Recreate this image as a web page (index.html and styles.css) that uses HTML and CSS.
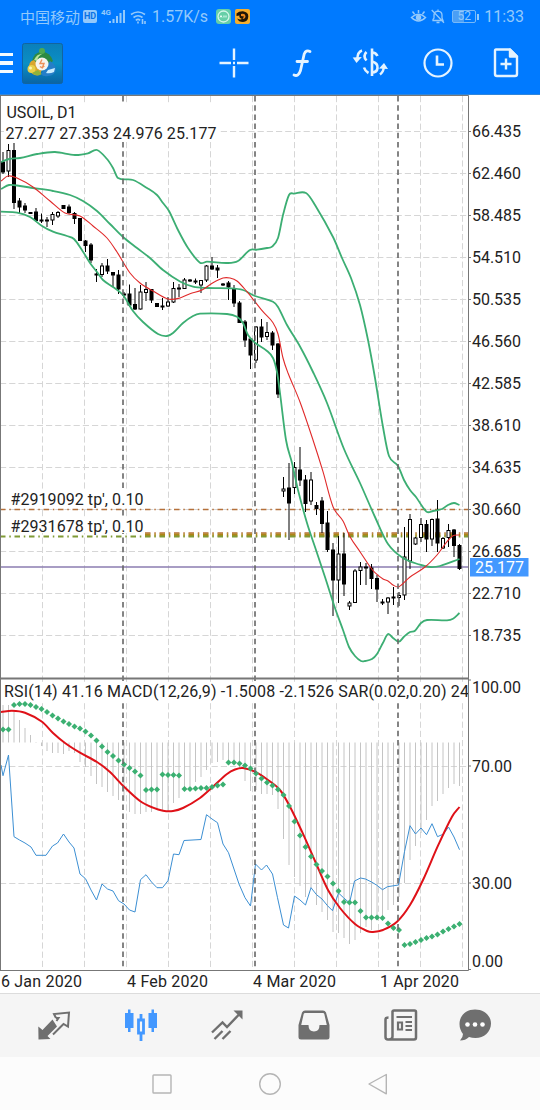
FILE: index.html
```html
<!DOCTYPE html>
<html lang="zh">
<head>
    <meta charset="UTF-8">
    <meta name="viewport" content="width=device-width, initial-scale=1.0">
    <title>USOIL, D1</title>
    <link rel="stylesheet" href="styles.css">
</head>
<body>
    <div class="screen">
        <header class="header">
            <div class="status">
                <span class="carrier">中国移动</span>
                <span class="hd">HD</span>
                <svg class="signal" width="25" height="18" viewBox="0 0 25 18">
                    <text x="0" y="7" font-size="8" font-weight="700" fill="currentColor">4G</text>
                    <path d="M9 15v-2M12.500 15v-4M16 15V8M19.500 15V5M23 15V2" stroke="currentColor" stroke-width="2" fill="none"/>
                </svg>
                <svg class="wifi" width="17" height="16" viewBox="0 0 17 16" fill="none" stroke="currentColor" stroke-width="1.6">
                    <path d="M1 5.500Q8 .5 15 5.500M3.500 8.500Q8 5 12.500 8.500M5.800 11.300Q8 9.500 10.200 11.300"/>
                    <path d="M8 12.500v2M12.500 10v5M15 12v3"/>
                </svg>
                <span class="speed">1.57K/s</span>
                <svg class="badge" width="15" height="15" viewBox="0 0 15 15">
                    <rect width="15" height="15" rx="3" fill="#66cfa8"/>
                    <circle cx="7.500" cy="7.500" r="5.500" fill="none" stroke="#d5f7ea" stroke-width="1.300"/>
                    <path d="M4 8.500l1-2 1 2M8 6.500v2M10 6.500v2" stroke="#e8fff6" fill="none"/>
                </svg>
                <svg width="15" height="15" viewBox="0 0 15 15">
                    <rect width="15" height="15" rx="2" fill="#f6ae2d"/>
                    <path d="M1.500 4.500Q4 2 8 2.200Q13.500 3 13.300 7.500Q13 12.800 8 13Q3.500 13 2.200 9.500Q5 11 7 10Q3.500 8.500 4.500 6.500L1.500 7Z" fill="#201607"/>
                    <path d="M6 5Q10 4 10.500 7Q10.500 10 7.500 10L9 7.500L6 7Z" fill="#f08a1c"/>
                </svg>
                <div class="status-right">
                    <svg width="17" height="15" viewBox="0 0 17 15" fill="none" stroke="currentColor" stroke-width="1.500">
                        <path d="M1.500 8.500Q8.500 2 15.500 8.500Q8.500 15.500 1.500 8.500ZM8.500 4V1M4.500 5L2.500 2.500M12.500 5L14.500 2.500"/>
                        <circle cx="8.500" cy="8.500" r="2" fill="currentColor"/>
                    </svg>
                    <svg class="bell" width="14" height="15" viewBox="0 0 14 15" fill="none" stroke="currentColor" stroke-width="1.300">
                        <path d="M2 11.500V10.500L3 9V5.500Q3.500 2.500 7 2.200Q10.800 2.500 11 6V9L12 11.500ZM7 2V.5M5.500 13.500H8.500M.7 1L13 13.700"/>
                    </svg>
                    <span class="battery">52</span>
                    <span class="clock">11:33</span>
                </div>
            </div>
            <div class="toolbar">
                <div class="burger"><i></i><i></i><i></i></div>
                <svg class="logo" width="41" height="41" viewBox="0 0 41 41">
                    <defs>
                        <linearGradient id="tile" x2="0" y2="1"><stop offset="0" stop-color="#0a7fba"/><stop offset=".5" stop-color="#0b8fc4"/><stop offset="1" stop-color="#0964a5"/></linearGradient>
                    </defs>
                    <rect x=".5" y=".5" width="40" height="40" rx="2" fill="url(#tile)" stroke="#1264a0"/>
                    <path d="M10 18Q12 9 20 9Q28 9 31 18L26 22L14 22Z" fill="#2d8a43"/>
                    <path d="M12 17Q15 10.500 20 11Q16 13 15 18Z" fill="#b9e39a"/>
                    <circle cx="20" cy="8" r="3" fill="#4fa951"/>
                    <path d="M7 27Q6 18 12 17L20 26L18 32Q11 34 7 27Z" fill="#d9a62e"/>
                    <circle cx="9.500" cy="26" r="4" fill="#e8d04a"/>
                    <circle cx="8.500" cy="25" r="1.500" fill="#fff6ae"/>
                    <path d="M10 30Q15 34 20 31L16 27Z" fill="#8fb33a"/>
                    <path d="M19 31L28 18Q33 21 34 26Q33 33 26 33Q21 34 19 31Z" fill="#257ec8"/>
                    <path d="M26 27L33 25L32 29Q28 31 24 30Z" fill="#c9edff"/>
                    <circle cx="20" cy="21" r="6.500" fill="#f6f4ef"/>
                    <path d="M20 16.500L18 20.500H22L20 25.500M18 23.500Q20 25.500 22.300 23" stroke="#ee9058" stroke-width="1.400" fill="none"/>
                </svg>
                <div class="tools">
                    <svg width="34" height="34" viewBox="0 0 34 34" stroke="currentColor" stroke-width="2.400">
                        <path d="M2.500 17H14M20 17H31.500M17 2.500V14M17 20V31.500M16 17H18"/>
                    </svg>
                    <svg width="34" height="34" viewBox="0 0 34 34" fill="none" stroke="currentColor" stroke-width="2.800" stroke-linecap="round" stroke-linejoin="round">
                        <path d="M25 5.500Q21 3.500 19.200 8L15.500 24.500Q13.500 31 9 29M12 15.500H22.500"/>
                    </svg>
                    <svg width="36" height="34" viewBox="0 0 36 34" fill="none" stroke="currentColor" stroke-width="2.600">
                        <path d="M20 2.500V30"/>
                        <path d="M25.500 10Q24 6.500 20 6.500M14.500 6Q10.500 10 14.500 14.500M12 21.500Q13 25 16.500 27M20 15.500Q26 17 25.500 22Q25 26.500 20 26.500"/>
                        <path d="M10 4.500Q5.500 6 5.300 13" stroke-width="2.400"/>
                        <path d="M.7 11.500L4.500 17L9.800 11Z" fill="currentColor" stroke="none"/>
                        <path d="M28 28.500Q31.500 26 31.800 21" stroke-width="2.400"/>
                        <path d="M27 22.500L32 17L36 23Z" fill="currentColor" stroke="none"/>
                    </svg>
                    <svg width="34" height="34" viewBox="0 0 34 34" fill="none" stroke="currentColor" stroke-width="2.200">
                        <circle cx="17" cy="17" r="13.500"/>
                        <path d="M16 9.500V18.500H23" stroke-width="2.600"/>
                    </svg>
                    <svg width="34" height="34" viewBox="0 0 34 34" fill="none" stroke="currentColor" stroke-width="2.400" stroke-linejoin="round">
                        <path d="M7 3.500H21L28 10.500V28Q28 30 26 30H8Q6 30 6 28V5Q6 3.500 7 3.500Z"/>
                        <path d="M21 3.500V10.500H28Z" fill="currentColor"/>
                        <path d="M17 12.500V23.500M11.500 18H22.500"/>
                    </svg>
                </div>
            </div>
        </header>

        <!-- chart coordinates are screen pixels, the view starts below the header -->
        <svg class="chart" width="540" height="898" viewBox="0 95 540 898">
            <defs>
                <clipPath id="plot"><rect x="0" y="95" width="468" height="876"/></clipPath>
            </defs>
            <g id="grid"></g>
            <g class="orders">
                <path class="tp" d="M0 509.500H468"/>
                <path class="tp" d="M145 533H468"/>
                <path class="tp-wide" d="M145 535H468"/>
                <path class="open" d="M0 536.500H468"/>
            </g>
            <path class="price-line" d="M0 567H468"/>
            <g id="histogram" class="histogram"></g>
            <g id="candles"></g>
            <g id="lines" clip-path="url(#plot)"></g>
            <g id="sar" class="sar"></g>
            <g id="months"></g>

            <g class="labels" clip-path="url(#plot)">
                <rect x="4" y="104" width="215" height="37"/>
                <rect x="9" y="491" width="137" height="17"/>
                <rect x="9" y="517" width="136" height="16"/>
                <rect x="3" y="682" width="465" height="19"/>
                <text x="6.500" y="118" textLength="70">USOIL, D1</text>
                <text x="5.500" y="139" textLength="211">27.277 27.353 24.976 25.177</text>
                <text x="10.500" y="505" textLength="133">#2919092 tp', 0.10</text>
                <text x="10.500" y="532" textLength="133">#2931678 tp', 0.10</text>
                <text x="4" y="697" textLength="465">RSI(14) 41.16 MACD(12,26,9) -1.5008 -2.1526 SAR(0.02,0.20) 24</text>
            </g>
            <g class="frame">
                <path d="M.5 95V970.500M0 95.500H468.500V970.500"/>
                <path d="M0 678.500H468" class="split"/>
                <path d="M0 970.500H468.500"/>
            </g>
            <g id="axis" class="axis"></g>
            <rect class="price-box" x="470" y="558" width="58.500" height="18.500"/>
            <text class="price-text" x="475" y="573" textLength="49">25.177</text>
        </svg>

        <nav class="tabs">
            <svg width="34" height="34" viewBox="0 0 34 34">
                <path d="M1.300 18.500L5.500 22L15.500 11.500L20 18.500L10.500 28L13.500 31L1.500 31.500Z" fill="currentColor"/>
                <path d="M19 10L17 6L32 4.500L31 18.500L26.500 16L16 26.500M19 10L21.500 10L19.500 13" fill="none" stroke="currentColor" stroke-width="2"/>
            </svg>
            <svg class="active" width="34" height="34" viewBox="0 0 34 34">
                <path d="M1 5H4V1.500H6.500V5H9.500V20H6.500V24H4V20H1ZM24.500 5H27.500V1.500H30V5H33V20H30V24H27.500V20H24.500Z" fill="currentColor"/>
                <path d="M14.500 12H19.500V25H14.500ZM17 11V6M17 26V33" fill="none" stroke="currentColor" stroke-width="2.800"/>
            </svg>
            <svg width="34" height="34" viewBox="0 0 34 34" fill="none" stroke="currentColor" stroke-width="2.400">
                <path d="M2 24.500L12.500 14.500L17 19L29 6.500M4.500 31L12.500 23M12.500 31L20.500 23"/>
                <path d="M23.500 2.500H32.500V11.500Z" fill="currentColor" stroke="none"/>
            </svg>
            <svg width="34" height="34" viewBox="0 0 34 34">
                <path fill-rule="evenodd" d="M8 2.500H26Q28 2.500 29 4.500L32.500 17V29Q32.500 31.500 30 31.500H4Q1.500 31.500 1.500 29V17L5 4.500Q6 2.500 8 2.500ZM8 5Q7 5 6.700 6L4.200 17H11.500Q11.500 23.500 17 23.500Q22.500 23.500 22.500 17H29.800L27.300 6Q27 5 26 5Z" fill="currentColor"/>
            </svg>
            <svg width="34" height="34" viewBox="0 0 34 34" fill="none" stroke="currentColor" stroke-width="2.500">
                <path d="M8.500 4Q8.500 2.500 10 2.500H30.500Q32 2.500 32 4V29.500Q32 31.500 30 31.500H4Q1.500 31.500 1.500 29V11.500Q1.500 9.500 4.500 9.500M8.500 3V28.500Q8.500 31.500 5 31.500"/>
                <path d="M12.500 9H28M21.500 14H28M21.500 18H28M21.500 22H28" stroke-width="2.200"/>
                <path d="M14 14.500H18V21.500H14Z" stroke-width="2.200"/>
            </svg>
            <svg width="34" height="34" viewBox="0 0 34 34">
                <path d="M17 1.500C26 1.500 33 7.500 33 15.500C33 24 26 30 17.500 30Q14 30 11 29Q7.500 32.500 2 32.500Q5 29.500 5 26Q1.500 21.500 1.500 16C1.500 7.500 8 1.500 17 1.500Z" fill="currentColor"/>
                <g fill="#fff"><circle cx="9.500" cy="16.500" r="2.300"/><circle cx="17" cy="16.500" r="2.300"/><circle cx="24.500" cy="16.500" r="2.300"/></g>
            </svg>
        </nav>

        <footer class="system-nav">
            <svg width="24" height="24" viewBox="0 0 24 24"><rect x="3" y="3" width="18" height="18" rx=".8"/></svg>
            <svg width="24" height="24" viewBox="0 0 24 24"><circle cx="12" cy="12" r="10.300"/></svg>
            <svg width="24" height="24" viewBox="0 0 24 24"><path d="M20.300 2.500V21.800L3 12Z"/></svg>
        </footer>
    </div>
    <script src="chart.js"></script>
</body>
</html>
```
FILE: styles.css
```css
* {
    box-sizing: border-box;
}
body {
    margin: 0;
    background: #fff;
    font-family: Roboto, "Noto Sans CJK SC", sans-serif;
}
.screen {
    display: flex;
    flex-direction: column;
    width: 540px;
    height: 1110px;
    overflow: hidden;
}
svg {
    display: block;
    flex: none;
}
.header {
    height: 95px;
    background: #007aff;
    color: #e4f3ff;
    border-bottom: 1px solid #2f86dc;
}
.status {
    display: flex;
    align-items: center;
    height: 32px;
    padding: 1px 16px 0 20px;
    color: #93c9fb;
    font-size: 16px;
}
.carrier {
    width: 63px;
    font-size: 15px;
    white-space: nowrap;
}
.hd {
    width: 14px;
    height: 13px;
    border-radius: 2px;
    background: #93c9fb;
    color: #0872e6;
    font-size: 9px;
    font-weight: 700;
    line-height: 13px;
    text-align: center;
}
.signal {
    margin-left: 4px;
}
.wifi {
    margin-left: 4px;
}
.speed {
    width: 64px;
    margin-left: 5px;
}
.badge {
    margin-right: 4px;
}
.status-right {
    display: flex;
    align-items: center;
    margin-left: auto;
}
.bell {
    margin-left: 4px;
}
.battery {
    position: relative;
    width: 24px;
    height: 13px;
    margin: 0 8px 0 7px;
    border: 1px solid #78b9f8;
    border-radius: 2px;
    background: linear-gradient(90deg, #4b9ff5 52%, transparent 52%);
    font-size: 12px;
    line-height: 11px;
    text-align: center;
}
.battery::after {
    content: "";
    position: absolute;
    top: 3px;
    right: -4px;
    width: 2px;
    height: 6px;
    background: #93c9fb;
}
.clock {
    font-size: 16px;
}
.toolbar {
    display: flex;
    align-items: center;
    height: 62px;
}
.burger {
    display: flex;
    flex-direction: column;
    gap: 5px;
    width: 13px;
}
.burger i {
    height: 3.500px;
    background: #f3faff;
}
.logo {
    margin-left: 9px;
}
.tools {
    display: grid;
    grid-template-columns: repeat(5, 68px);
    justify-items: center;
    margin-left: auto;
}

/* chart */
.chart {
    background: #fff;
    font-size: 16px;
}
.chart text {
    fill: #222;
}
.labels rect {
    fill: #fff;
}
.grid {
    stroke: #d6d6d6;
    stroke-dasharray: 6.2 3;
}
.month {
    stroke: #666;
    stroke-width: 1.6;
    stroke-dasharray: 5.5 3.7;
}
.frame path {
    fill: none;
    stroke: #777;
}
.frame .split {
    stroke-width: 2;
}
.axis path {
    stroke: #777;
}
.orders path {
    fill: none;
}
.orders .tp {
    stroke: #b5703a;
    stroke-width: 1.4;
    stroke-dasharray: 5.5 3.8 1.5 3.7;
}
.orders .tp-wide {
    stroke: #b08418;
    stroke-width: 3;
    stroke-dasharray: 5.5 3.8 1.5 3.7;
}
.orders .open {
    stroke: #7f9a35;
    stroke-width: 1.8;
    stroke-dasharray: 5.5 3.8 1.5 3.7;
}
.price-line {
    stroke: #8b7db0;
    stroke-width: 1.4;
}
.price-box {
    fill: #4398ff;
}
.chart .price-text {
    fill: #fff;
}
.candle {
    stroke: #000;
    fill: #000;
}
.candle .up {
    fill: #fff;
}
.histogram path {
    stroke: #c4c4c4;
}
.sar path {
    fill: #3bb071;
}
.band {
    fill: none;
    stroke: #3cae73;
    stroke-width: 1.8;
    stroke-linejoin: round;
}
.average {
    fill: none;
    stroke: #e02a2a;
    stroke-width: 1.1;
}
.signal-line {
    fill: none;
    stroke: #df1118;
    stroke-width: 2;
}
.rsi {
    fill: none;
    stroke: #3c8fd3;
    stroke-width: 1;
}

/* bottom */
.tabs {
    display: grid;
    grid-template-columns: repeat(5, 86.700px) 62px;
    align-items: center;
    justify-items: center;
    height: 64px;
    padding: 0 0 1px 10.500px;
    border-top: 1px solid #dcdcdc;
    background: #f5f5f5;
    color: #6f6f6f;
}
.tabs .active {
    color: #4398ff;
}
.system-nav {
    display: grid;
    grid-template-columns: repeat(3, 108px);
    align-items: center;
    justify-content: center;
    justify-items: center;
    height: 53px;
    background: #fcfcfc;
}
.system-nav svg {
    fill: none;
    stroke: #b5b5b5;
    stroke-width: 1.4;
    stroke-linejoin: round;
}
```
FILE: chart.js
```js
const NS = 'http://www.w3.org/2000/svg';
const barX = i => 3 + i * 5.5;

function add(parent, tag, attrs, text) {
    const el = document.createElementNS(NS, tag);
    for (const key in attrs) el.setAttribute(key, attrs[key]);
    if (text) el.textContent = text;
    parent.appendChild(el);
    return el;
}
const byId = id => document.getElementById(id);

// wick top, body top, body bottom, wick bottom, 1 = falling bar
const candles = [
    [152,162,172,174,1],[144,150.5,171,177,0],[143,150.5,202.5,209,1],[198,201,207,214,1],
    [203,206,210,213,1],[212,212.5,213.5,214,1],[208,212,220.5,222,1],[213.5,220,221,223,1],
    [217,220,221,227,1],[212,214.5,220,225,0],[211,212.5,216,218,0],[205,205.5,208.5,209,1],
    [204.5,207,212.5,214,1],[212,213.5,218.5,224,1],[218,218.5,240.5,241,1],[240,241,245.5,252,1],
    [243,245,260,263,1],[269,274,275,282,1],[263,266,274.5,277,0],[259,266,271,274,1],
    [272,272.5,275,287,1],[270,275,289,294,1],[292,294,295,298,1],[284.5,294,305,307,1],
    [288,304.5,309,310,1],[285,292,309,309.5,0],[282,289.5,292.5,301,0],[289,289.5,300,303,1],
    [303,303.5,306.5,307,1],[298,306,307,310,1],[297,302,306,307,0],[282,288.5,302,303,0],
    [284,288,289,297,1],[278,280,288.5,289,0],[279,280,281,282,1],[278.5,281,282,284,1],
    [280,280.5,285,293,0],[265,266,280,282,0],[257,266,269,270,1],[265,268,270,278,1],
    [283,284,285,286,1],[281,283,287,300,1],[285,289,303,307,1],[301,303,322.5,323,1],
    [320,322,340,347,1],[338,339,355,369,1],[326,327,360,363,0],[319,327,337,342,1],
    [322,332.5,336.5,340,0],[331,333,345,350,1],[343,344,394,398,1],[477,489,491,497,0],
    [463,488,503,540,1],[462,467.5,487.5,494,0],[447,470,480,486,1],[475,480,503.5,512,1],
    [472,480,501,505,0],[502,505.5,508.5,515,1],[497,501,523.5,533,1],[511,523,549.5,552,1],
    [543,550,580,616,1],[536,554,580,603,0],[533,554,584,596,1],[601,603,606,610,0],
    [569,571,602.5,603,0],[562,567,570.5,585,0],[563,567,568,585,1],[564,568,578.5,589,1],
    [575,578.5,589,602,1],[599,602,603,605,1],[597,598,602,614,0],[587,597,598,605,1],
    [592,595.5,597.5,606,0],[527,557,595,600,0],[514,519.5,561,569,0],[537,538,544,545,0],
    [518,524.5,537.5,542,0],[520,524.5,539,552,1],[518.5,519.5,539,546,0],[500,519,543,552,1],
    [537,538.5,548,549,0],[524,530.5,537.5,547,0],[529,530,545.5,557,1],[544,545.5,568.5,570,1]
];

const upper = '1,162 9,159 20,158 37,154 55,152 75,155 88,153.3 97,150 107,159 113,168 118,178 133,180 147,188 157,195 163,203 169,211 178,230 188,248 200,262.7 207,261.7 227,263 238,261 250,250 257,249.7 267,248 272,246.7 278,238 283,215 289,195 294,193.7 306,193 315,205 333,237 342,258 351,278 360,305 368,340 375,378 383,427 389,456 398,466 404,480 410,490 416,497 422,506 427,512 433,511 442,509 448,505 454,503 459.5,505';
const middle = '1,189 9,185 20,186 33,188 53,191 70,195 83,201 97,211 110,224 123,237 137,248 150,258 163,270 180,281.5 193,286.7 207,288 230,288.3 243,290 255,296 273,301.7 278,307 287,325 300,346.5 313,372 327,403 344,449 360,483 375,517 388,544 403,558 420,564.7 430,567 440,566 459.5,559';
const lower = '1,211.7 17,212.7 30,217 42,226 53,231.7 67,236 74,239 83,251.7 90,263 97,272 103,280 113,287 123,295 133,311 143,322 158,334 167,336 173,333 183,323 193,316 200,313.7 227,314 237,316.7 243,323 248,335 255,342.7 267,351 273,358 277,372 280,393 286,440 292,463 298,490 307,523 315,547 325,577 335,608 343,630 349,647 355,656 361,661 365,661 372,659 377,654 383,642.7 388,634 393,638 399,641.7 404,636.7 410,632 415,630.7 421,623 427,620 447,620.3 453,618.7 459.5,613';
const average = '1,181 8,176 17,178 33,187 50,201 65,213 80,216 93,226 107,238 117,252 130,273 140,283 153,291 168,299 180,298 190,293.7 202,290 213,282.7 223,278 230,278 237,281 247,291.7 255,301.7 263,311.7 273,322.7 278,334 283,358 288,373 300,402 313,440 323,471.7 333,506.7 343,521 350,536.7 360,551.7 370,566.7 375,572.7 383,579 388,581 393,585 399,586.7 410,577 425,567 437,555 447,541.7 453,535.7 459.5,535';
const signal = '1,712 12,710.7 25,712.7 42,721.7 53,733 65,743 80,752.7 97,762 110,772 123,785.7 140,801 153,807.7 163,810.7 173,811 183,808 200,798 213,786.7 227,774 235,769.500 243,768 255,771.7 268,780 280,790 290,806.7 302,831.7 315,861 328,890 340,908 355,924 367,931 373,932 383,930 397,921.7 410,905 423,880 438,845.7 452,816.7 459.5,807';
const rsi = '1,765 3,775.7 8.5,755 14,836.7 19.5,840 25,843 31,847 36,855.3 46,855.3 52.5,846 57.5,843 63.5,834 69,842 74,848 80,874 85.5,878.7 91,890 96.5,900 102,884 107.5,889 113,891 118.5,900.7 124,904 129.5,910 135,912 140.5,879.7 146,874.7 151.5,882 157,887.7 162.5,887.7 168,880.7 173.5,854 179,854.7 184,840.5 201,839.5 206.5,814.7 212,819 217.5,822.7 223,844 228.5,852.7 239,884 245,897.7 250.5,906 255.5,864 261.5,870 266.5,865 272.5,874 277.5,897.7 283.5,925 288.5,928 294.5,896 300,900 305.5,905 311,887.7 316.5,894.7 322,899 327.5,905.7 332.5,910.7 338.5,893 343.5,897.7 349.5,903 354.5,881 360.5,878 365.5,879 371.5,882 376.5,885 382.5,889.7 387.5,886.7 398.5,885 404.5,851.7 410,825.7 415.5,834 421,828 426.5,834.7 432,823.7 437.5,836.7 443.5,834 448.5,827 454,837 459.5,849.7';

// far end of each MACD bar, the zero line is at 742.5
const macd = [705,705,712,720,728,735,742,746,751,753,753,754,751,753,762,767,776,784,787,792,796,800,801,812,814,814,812,812,809,810,811,803,798,789,786,782,777,770,763,762,760,761,763,768,781,791,790,794,794,795,809,839,865,877,886,897,888,905,912,920,932,933,938,944,940,933,927,930,920,917,910,905,897,883,860,846,833,820,806,801,794,788,784,786];

const sar = [729.5,729.5,705,704,704,705,707,709,712,715.5,718.5,721.5,724,726.5,728.5,731.5,735.5,740.5,746.5,752,756,760.5,764.5,768,771.5,775.5,790,789.5,789.5,774.5,775,775,775.5,789,789,788.5,788,788,787,785.5,784.5,762.5,762.5,763.5,765.5,768.5,773.5,778.5,782.5,785.5,789.5,795,806,821.5,835.5,847,856.5,864.5,871,876.5,883.5,891,902,902.5,902.5,911,917.5,917.5,917.5,918,923.5,928,930,945,944,942,940,938,936.5,934.5,931.5,929,926.5,924];

function parse(str) {
    return str.split(' ').map(p => p.split(',').map(Number));
}

// smooth curve through all of the points
function curve(str) {
    const p = parse(str);
    let d = `M${p[0]}`;
    for (let i = 0; i < p.length - 1; i++) {
        const a = p[i - 1] || p[i], b = p[i], c = p[i + 1], e = p[i + 2] || c;
        const k = (c[0] - b[0]) / 3;
        const s1 = (c[1] - a[1]) / (c[0] - a[0]);
        const s2 = (e[1] - b[1]) / (e[0] - b[0]);
        d += `C${b[0] + k},${b[1] + k * s1} ${c[0] - k},${c[1] - k * s2} ${c}`;
    }
    return d;
}

const grid = byId('grid');
for (let x = 42.5; x < 468; x += 42) add(grid, 'path', { class: 'grid', d: `M${x} 96V970` });
for (let y = 131.5; y < 640; y += 42) add(grid, 'path', { class: 'grid', d: `M0 ${y}H468` });
[766.5, 883.5].forEach(y => add(grid, 'path', { class: 'grid', d: `M0 ${y}H468` }));
[123, 255, 398].forEach(x => add(byId('months'), 'path', { class: 'month', d: `M${x} 96V970` }));

macd.forEach((y, i) => add(byId('histogram'), 'path', { d: `M${barX(i)} 742.500V${y}` }));

candles.forEach(([high, top, bottom, low, down], i) => {
    const g = add(byId('candles'), 'g', { class: 'candle' });
    const x = barX(i);
    add(g, 'path', { d: `M${x} ${high}V${low}` });
    add(g, 'rect', { class: down ? 'down' : 'up', x: x - 1.5, y: top, width: 3, height: bottom - top });
});

const lines = byId('lines');
[upper, middle, lower].forEach(s => add(lines, 'path', { class: 'band', d: curve(s) }));
add(lines, 'path', { class: 'average', d: curve(average) });
add(lines, 'polyline', { class: 'rsi', points: rsi });
add(lines, 'path', { class: 'signal-line', d: curve(signal) });

sar.forEach((y, i) => add(byId('sar'), 'path', { d: `M${barX(i)} ${y - 3}l3 3l-3 3l-3 -3z` }));

const axis = byId('axis');
['66.435', '62.460', '58.485', '54.510', '50.535', '46.560', '42.585', '38.610', '34.635', '30.660', '26.685', '22.710', '18.735'].forEach((label, i) => {
    const y = 131.5 + i * 42;
    add(axis, 'path', { d: `M468 ${y}h3` });
    add(axis, 'text', { x: 472, y: y + 5.5, textLength: 49 }, label);
});
[['100.00', 693, 49, 680], ['70.00', 771.5, 40, 766], ['30.00', 888.5, 40, 883], ['0.00', 966.5, 31, 969.5]].forEach(([label, y, w, tick]) => {
    add(axis, 'path', { d: `M468 ${tick}h3` });
    add(axis, 'text', { x: 472, y: y, textLength: w }, label);
});
[['6 Jan 2020', 1, 81], ['4 Feb 2020', 127, 81], ['4 Mar 2020', 253, 83], ['1 Apr 2020', 380, 79]].forEach(([label, x, w]) => {
    add(axis, 'text', { x: x, y: 987, textLength: w }, label);
});
```
